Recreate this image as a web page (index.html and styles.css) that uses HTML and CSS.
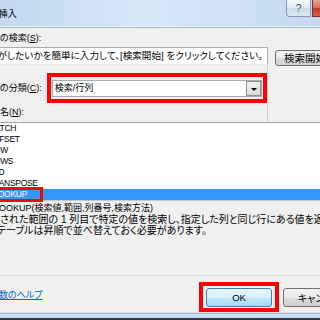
FILE: index.html
```html
<!DOCTYPE html>
<html>
  <head>
    <meta charset="utf-8" />
    <title>関数の挿入</title>
    <link rel="stylesheet" href="styles.css">
  </head>
  <body>
    <div class="window">
      <div class="titlebar">
        <span class="title">関数の挿入</span>
        <div class="caption-btns">
          <span class="help-btn">?</span>
          <span class="close-btn"></span>
        </div>
      </div>

      <div class="client">
        <div class="dialog">
          <div class="label lbl-search">関数の検索(<u>S</u>):</div>
          <div class="search-row">
            <div class="textbox">何がしたいかを簡単に入力して、[検索開始] をクリックしてください。</div>
            <button class="btn btn-search">検索開始(<u>G</u>)</button>
          </div>

          <div class="category-block">
            <div class="category-row">
              <div class="label lbl-cat">関数の分類(<u>C</u>):</div>
              <div class="mark mark-select">
                <div class="select">
                  <span class="select-text">検索/行列</span>
                  <span class="drop"><span class="arrow"></span></span>
                </div>
              </div>
            </div>
            <div class="label lbl-name">関数名(<u>N</u>):</div>
          </div>

          <ul class="list">
            <li>MATCH</li>
            <li>OFFSET</li>
            <li>ROW</li>
            <li>ROWS</li>
            <li>RTD</li>
            <li>TRANSPOSE</li>
            <li class="selected">VLOOKUP</li>
            <span class="mark mark-row"></span>
          </ul>

          <p class="syntax">VLOOKUP(検索値,範囲,列番号,検索方法)</p>
          <p class="desc">
            <span class="desc-line">指定された範囲の 1 列目で特定の値を検索し、指定した列と同じ行にある値を返します。</span>
            <span class="desc-line desc-line2">テーブルは昇順で並べ替えておく必要があります。</span>
          </p>

          <div class="separator"></div>

          <div class="footer">
            <a class="help-link" href="#">関数のヘルプ</a>
            <div class="mark mark-ok">
              <button class="btn btn-ok">OK</button>
            </div>
            <button class="btn btn-cancel">キャンセル</button>
          </div>
        </div>
      </div>

      <div class="frame-bottom"></div>
    </div>
  </body>
</html>
```

FILE: styles.css
```css
html,
body {
  margin: 0;
  padding: 0;
}
body {
  width: 320px;
  height: 320px;
  overflow: hidden;
  font-family: "Liberation Sans", "Noto Sans CJK JP", sans-serif;
  font-size: 9px;
  font-feature-settings: "palt";
  color: #000;
  background: #f0f0f0;
}
.window {
  width: 320px;
  height: 320px;
  display: flex;
  flex-direction: column;
  overflow: hidden;
}

/* title bar */
.titlebar {
  height: 26px;
  display: flex;
  align-items: center;
  background: linear-gradient(to right, #c3d9f0, #d6e7f8 45%, #cfe2f6 70%, #c4d9f0);
  border-bottom: 1px solid #eef4fb;
  box-shadow: 0 1px 0 #a3b1c0;
  margin-bottom: 1px;
  flex: none;
}
.title {
  margin-left: -28px;
  font-size: 9px;
  white-space: nowrap;
}
.caption-btns {
  margin-left: auto;
  align-self: flex-start;
  display: flex;
  gap: 1px;
}
.help-btn {
  width: 25px;
  height: 17px;
  box-sizing: border-box;
  border: 1px solid #8a9bb0;
  border-top: none;
  border-radius: 0 0 0 4px;
  background: linear-gradient(#f7fafd, #dfe8f2 50%, #cdd9e7 51%, #dde8f3);
  text-align: center;
  font-size: 11px;
  line-height: 16px;
  color: #46546a;
  text-shadow: 0 0 2px #fff;
}
.close-btn {
  width: 8px;
  height: 17px;
  box-sizing: border-box;
  border: 1px solid #7d3128;
  border-top: none;
  border-right: none;
  background: linear-gradient(#e8a596, #d36a55 50%, #c0392b 51%, #d2604b);
}

/* client area */
.client {
  flex: 1;
  background: #f0f0f0;
}
.dialog {
  margin-left: -20px;
  width: 400px;
}
.label {
  line-height: 12px;
  height: 12px;
  white-space: nowrap;
}
.lbl-search {
  margin-top: 4px;
  padding-left: 2px;
}
.lbl-name {
  margin-top: 3px;
  padding-left: 2px;
}

.search-row {
  margin-top: 3px;
  display: flex;
  align-items: flex-start;
}
.textbox {
  margin-left: 5px;
  width: 283px;
  height: 18px;
  box-sizing: border-box;
  border: 1px solid #abadb3;
  border-left-color: #dbdfe6;
  border-bottom-color: #e3e9ef;
  background: #fff;
  padding-left: 2px;
  font-size: 9.6px;
  line-height: 16px;
  white-space: nowrap;
  overflow: hidden;
}
.btn {
  font-family: "Liberation Sans", "Noto Sans CJK JP", sans-serif;
  font-size: 9px;
  font-feature-settings: "palt";
  color: #000;
  padding: 0;
  border: 1px solid #707070;
  border-radius: 3px;
  background: linear-gradient(#f2f2f2, #ebebeb 50%, #dddddd 51%, #cfcfcf);
  white-space: nowrap;
}
.btn-search {
  margin-left: 7px;
  margin-top: 3px;
  width: 75px;
  height: 16px;
  font-size: 10.5px;
  line-height: 14px;
}

.category-block {
  width: 287px;
  padding: 7px 0 4px;
  border-right: 1px solid #cfcfcf;
}
.category-row {
  height: 30px;
  display: flex;
  align-items: center;
}
.lbl-cat {
  width: 66px;
  padding-left: 2px;
}
.mark {
  border: 4px solid #ff0000;
  box-sizing: border-box;
}
.mark-select {
  width: 224px;
  height: 30px;
  padding: 3px 1px 2px 1px;
}
.select {
  height: 17px;
  box-sizing: border-box;
  border: 1px solid #a5acb5;
  background: #fff;
  display: flex;
  align-items: center;
}
.select-text {
  flex: 1;
  padding-left: 2px;
  line-height: 15px;
}
.drop {
  width: 15px;
  height: 15px;
  box-sizing: border-box;
  border: 1px solid #8e8f8f;
  background: linear-gradient(#f2f2f2, #dcdcdc);
  display: flex;
  align-items: center;
  justify-content: center;
}
.arrow {
  width: 0;
  height: 0;
  border-left: 3px solid transparent;
  border-right: 3px solid transparent;
  border-top: 3px solid #000;
  margin-top: 1px;
}

/* function list */
.list {
  list-style: none;
  margin: 0 0 0 5px;
  padding: 0;
  position: relative;
  background: #fff;
  border-top: 1px solid #a0a0a0;
  border-bottom: 1px solid #c8c8c8;
  font-family: "Liberation Sans", sans-serif;
  font-size: 8.5px;
  letter-spacing: -0.3px;
}
.list li {
  height: 11px;
  line-height: 11px;
  padding-left: 3px;
}
.list li.selected {
  background: #3399ff;
  color: #fff;
}
.mark-row {
  position: absolute;
  left: -10px;
  top: 64px;
  width: 68px;
  height: 15px;
  border-width: 3px;
}

.syntax {
  margin: 2px 0 0;
  padding-left: 8px;
  line-height: 11px;
  white-space: nowrap;
}
.desc {
  margin: 0;
  font-size: 10px;
  line-height: 11px;
  white-space: nowrap;
}
.desc-line {
  display: block;
  height: 11px;
}
.desc-line2 {
  padding-left: 17px;
}
.separator {
  margin-top: 39px;
  height: 1px;
  background: #d5dbe1;
}

/* buttons row */
.footer {
  height: 36px;
  box-sizing: border-box;
  padding: 6px 22px 0 0;
  display: flex;
  align-items: flex-start;
}
.help-link {
  margin: 7px 0 0 10px;
  line-height: 12px;
  color: #0066cc;
  text-decoration: underline;
  white-space: nowrap;
}
.mark-ok {
  margin-left: auto;
  width: 80px;
  height: 30px;
  padding: 2px 3px 0 3px;
}
.btn-ok {
  width: 66px;
  height: 19px;
  font-size: 9.5px;
  border-color: #3c7fb1;
  background: linear-gradient(#eaf6fd, #d9f0fc 50%, #bee6fd 51%, #a7d9f5);
}
.btn-cancel {
  margin: 6px 0 0 4px;
  width: 75px;
  height: 19px;
  font-size: 10px;
}

.frame-bottom {
  flex: none;
  height: 8px;
  box-sizing: border-box;
  border-top: 1px solid #dfe3e8;
  background: linear-gradient(#9fb0c4 0, #9fb0c4 1px, #d7e6f6 1px, #c3d8ee 5px, #2f3640 5px);
}
```
